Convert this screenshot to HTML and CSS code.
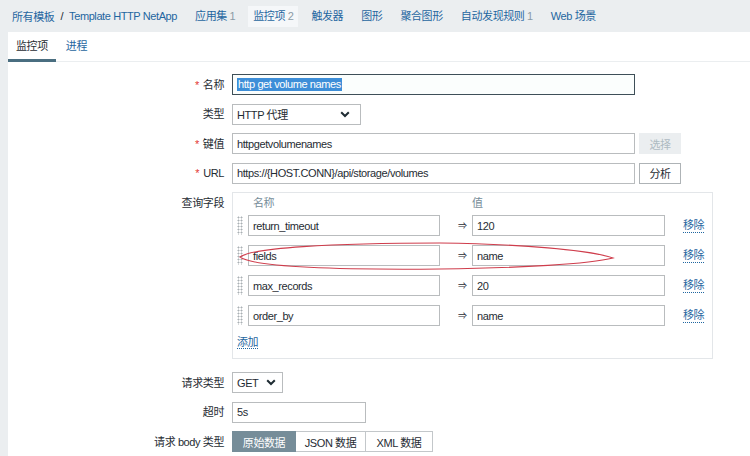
FILE: index.html
```html
<!DOCTYPE html>
<html lang="zh-CN">
<head>
<meta charset="utf-8">
<title>监控项</title>
<link rel="stylesheet" href="styles.css">
</head>
<body>
<nav class="topnav">
  <div class="crumbs"><a href="#">所有模板</a><span class="sep">/</span><a href="#">Template HTTP NetApp</a></div>
  <a class="nav-item" href="#">应用集 <span class="count">1</span></a>
  <a class="nav-item selected" href="#">监控项 <span class="count">2</span></a>
  <a class="nav-item" href="#">触发器</a>
  <a class="nav-item" href="#">图形</a>
  <a class="nav-item" href="#">聚合图形</a>
  <a class="nav-item" href="#">自动发现规则 <span class="count">1</span></a>
  <a class="nav-item" href="#">Web 场景</a>
</nav>
<main class="card">
  <div class="tabs"><span class="tab active">监控项</span><a class="tab" href="#">进程</a></div>
  <div class="form">
    <div class="row">
      <div class="lbl"><span class="req">*</span>名称</div>
      <div class="input wide focus"><span class="sel">http get volume names</span></div>
    </div>
    <div class="row">
      <div class="lbl">类型</div>
      <div class="input select type-select"><span>HTTP 代理</span><svg class="chev" width="10" height="7" viewBox="0 0 10 7"><path d="M1.2 1.2 L5 5 L8.8 1.2" fill="none" stroke="#1f2c33" stroke-width="2"/></svg></div>
    </div>
    <div class="row">
      <div class="lbl"><span class="req">*</span>键值</div>
      <div class="input wide">httpgetvolumenames</div>
      <span class="btn disabled">选择</span>
    </div>
    <div class="row">
      <div class="lbl"><span class="req">*</span>URL</div>
      <div class="input wide">https://{HOST.CONN}/api/storage/volumes</div>
      <span class="btn">分析</span>
    </div>
    <div class="row top gap-lg">
      <div class="lbl lbl-top">查询字段</div>
      <div class="qbox">
        <div class="qhead"><span class="qh-name">名称</span><span class="qh-val">值</span></div>
        <div class="qrow"><span class="handle"></span><div class="input qname">return_timeout</div><span class="arrow">⇒</span><div class="input qval">120</div><a class="link-dot remove" href="#">移除</a></div>
        <div class="qrow"><span class="handle"></span><div class="input qname">fields</div><span class="arrow">⇒</span><div class="input qval">name</div><a class="link-dot remove" href="#">移除</a></div>
        <div class="qrow"><span class="handle"></span><div class="input qname">max_records</div><span class="arrow">⇒</span><div class="input qval">20</div><a class="link-dot remove" href="#">移除</a></div>
        <div class="qrow"><span class="handle"></span><div class="input qname">order_by</div><span class="arrow">⇒</span><div class="input qval">name</div><a class="link-dot remove" href="#">移除</a></div>
        <div class="add-line"><a class="link-dot" href="#">添加</a></div>
      </div>
    </div>
    <div class="row">
      <div class="lbl">请求类型</div>
      <div class="input select get-select"><span>GET</span><svg class="chev" width="10" height="7" viewBox="0 0 10 7"><path d="M1.2 1.2 L5 5 L8.8 1.2" fill="none" stroke="#1f2c33" stroke-width="2"/></svg></div>
    </div>
    <div class="row">
      <div class="lbl">超时</div>
      <div class="input timeout">5s</div>
    </div>
    <div class="row">
      <div class="lbl">请求 body 类型</div>
      <div class="seg"><span class="seg-item on s1">原始数据</span><span class="seg-item s2">JSON 数据</span><span class="seg-item s3">XML 数据</span></div>
    </div>
  </div>
</main>
<svg class="annot" width="750" height="456" viewBox="0 0 750 456">
  <path d="M240 257 C 252 248, 330 243, 440 243 C 520 244, 590 250, 613 258 C 590 264, 520 268, 440 269 C 330 270, 254 267, 240 257 Z" fill="none" stroke="#cf3d4c" stroke-width="1.1"/>
</svg>
</body>
</html>
```
FILE: styles.css
```css
* { box-sizing: border-box; }
html, body { margin: 0; padding: 0; }
body {
  position: relative;
  width: 750px;
  height: 456px;
  overflow: hidden;
  background: #ebeef0;
  font-family: "Liberation Sans", "Noto Sans CJK SC", Arial, sans-serif;
  font-size: 11px;
  letter-spacing: -0.4px;
  color: #1f2c33;
}
a { color: #1f66a0; text-decoration: none; }

.topnav {
  height: 32px;
  display: flex;
  align-items: center;
  gap: 8px;
  padding-left: 12px;
}
.crumbs { display: flex; align-items: center; margin-right: 5px; }
.sep { color: #1f2c33; margin: 0 6px; }
.nav-item { padding: 4px 5px; line-height: 13px; }
.nav-item.selected { background: #f5f7f9; }
.count { color: #8a9ba5; }

.card {
  margin-left: 8px;
  height: 424px;
  background: #fff;
}
.tabs {
  display: flex;
  gap: 2px;
  height: 30px;
  border-bottom: 1px solid #ebeef0;
}
.tab { padding: 7px 8px 0; line-height: 14px; height: 30px; }
.tab.active { border-bottom: 3px solid #4a6e80; color: #1f2c33; }

.form { padding-top: 12px; }
.row {
  display: flex;
  align-items: center;
  margin-bottom: 8.5px;
}
.row.top { align-items: flex-start; }
.row.gap-lg { margin-bottom: 13px; }
.lbl {
  flex: none;
  width: 224px;
  padding-right: 8px;
  text-align: right;
  line-height: 14px;
}
.lbl-top { margin-top: 4px; }
.req { color: #e33734; margin-right: 4px; }

.input {
  height: 21px;
  border: 1px solid #b9bcbe;
  background: #fff;
  padding: 0 4px;
  display: flex;
  align-items: center;
  white-space: nowrap;
}
.wide { width: 403px; }
.focus { border-color: #3e4f58; background: #fbfefd; }
.sel { background: #3d8ed8; color: #fff; line-height: 13px; padding: 0 1px; }
.select { justify-content: space-between; padding-right: 10px; }
.type-select { width: 129px; }
.get-select { width: 51px; padding-right: 6px; }
.timeout { width: 134px; }
.chev { display: block; }

.btn {
  margin-left: 4px;
  width: 42px;
  height: 21px;
  border: 1px solid #aeb3b6;
  background: #fff;
  display: flex;
  align-items: center;
  justify-content: center;
  color: #1f2c33;
}
.btn.disabled { background: #ebeef0; border-color: #ebeef0; color: #aebbc2; }

.qbox {
  width: 481px;
  border: 1px solid #e3e6e9;
  padding: 3px 0 9px 4px;
}
.qhead { display: flex; line-height: 14px; margin-bottom: 5px; color: #768d99; }
.qh-name { width: 203px; padding-left: 16px; }
.qh-val { padding-left: 32px; }
.qrow { display: flex; align-items: center; margin-bottom: 9px; }
.handle {
  width: 6px;
  height: 19px;
  margin-right: 5px;
  background-image: radial-gradient(circle, #a9b0b4 0.9px, transparent 1.1px);
  background-size: 3px 3px;
}
.qname { width: 192px; }
.qval { width: 193px; }
.arrow { width: 32px; text-align: right; padding-right: 5px; color: #1f2c33; letter-spacing: 0; font-size: 9px; }
.remove { margin-left: 18px; }
.link-dot { border-bottom: 1px dotted #1f66a0; line-height: 13px; }
.add-line { line-height: 14px; }

.seg { display: flex; }
.seg-item {
  height: 21px;
  border: 1px solid #c3c7ca;
  display: flex;
  align-items: center;
  justify-content: center;
  color: #1f2c33;
}
.seg-item + .seg-item { border-left: none; }
.seg-item.on { background: #768d99; border-color: #768d99; color: #fff; }
.s1 { width: 64px; }
.s2 { width: 70px; }
.s3 { width: 67px; }

.annot {
  position: absolute;
  left: 0;
  top: 0;
  pointer-events: none;
}
```
